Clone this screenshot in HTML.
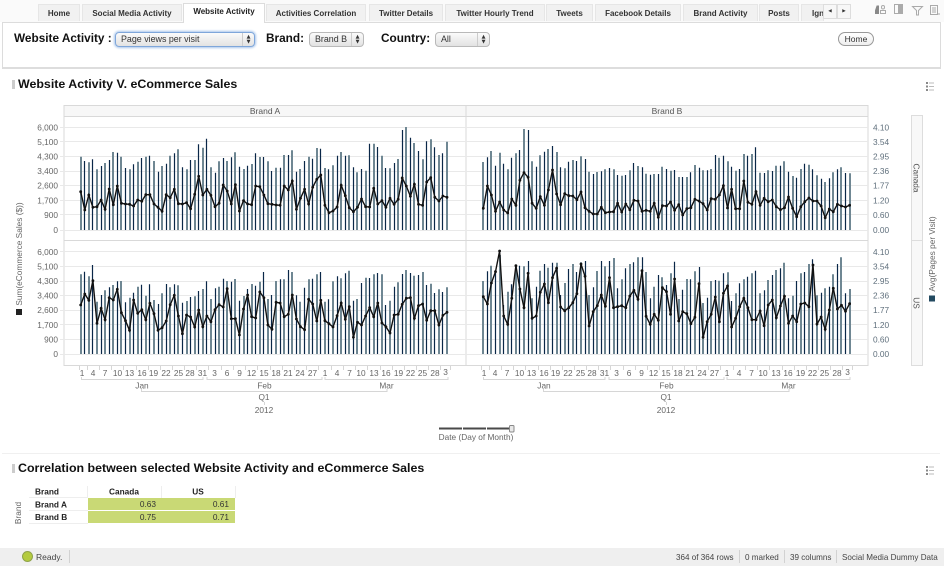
<!DOCTYPE html>
<html>
<head>
<meta charset="utf-8">
<style>
html,body{margin:0;padding:0;background:#fff}
#p{position:relative;width:944px;height:566px;overflow:hidden;background:#fff;font-family:"Liberation Sans",sans-serif;color:#222;filter:blur(0.3px)}
#p div{position:absolute;white-space:nowrap;box-sizing:border-box}
.tab{top:4px;height:17px;background:#f1f1f1;border:1px solid #e6e6e6;border-bottom:none;font:bold 8px/17px "Liberation Sans",sans-serif;text-align:center;color:#333}
.lab{font:bold 11.8px/16px "Liberation Sans",sans-serif;color:#111;top:30px}
.sel{height:15px;border:1px solid #b9b9b9;border-radius:4px;background:linear-gradient(#fbfbfb,#e2e2e2);font:8.9px/13px "Liberation Sans",sans-serif;color:#333;padding-left:5px}
.arr{right:0;top:0;width:12px;height:13px;border-left:1px solid #ccc;font:5px/5px "DejaVu Sans",sans-serif;text-align:center;padding-top:2px}
.ttl{font:bold 12.4px/16px "Liberation Sans",sans-serif;color:#111;left:18px}
.st{top:552px;font:8.1px/11px "Liberation Sans",sans-serif;color:#444}
.sp{top:550px;width:1px;height:13px;background:#d2d2d2}
svg{position:absolute;left:0;top:0}
svg text{font-family:"Liberation Sans",sans-serif}
</style>
</head>
<body>
<div id="p">
<div style="left:0;top:0;width:944px;height:22px;background:#fafafa"></div>
<div class="tab" style="left:38px;width:42px">Home</div>
<div class="tab" style="left:82px;width:100px">Social Media Activity</div>
<div class="tab" style="left:266px;width:100px">Activities Correlation</div>
<div class="tab" style="left:369px;width:74px">Twitter Details</div>
<div class="tab" style="left:445px;width:100px">Twitter Hourly Trend</div>
<div class="tab" style="left:546px;width:47px">Tweets</div>
<div class="tab" style="left:595px;width:86px">Facebook Details</div>
<div class="tab" style="left:683px;width:75px">Brand Activity</div>
<div class="tab" style="left:759px;width:40px">Posts</div>
<div class="tab" style="left:801px;width:23px;text-align:left;padding-left:10px;overflow:hidden">Ignite</div>
<div style="left:823px;top:4px;width:14px;height:15px;background:#f7f7f7;border:1px solid #ddd;font:4.5px/13px 'DejaVu Sans',sans-serif;text-align:center;color:#333">◀</div>
<div style="left:837px;top:4px;width:14px;height:15px;background:#f7f7f7;border:1px solid #ddd;font:4.5px/13px 'DejaVu Sans',sans-serif;text-align:center;color:#333">▶</div>
<div style="left:2px;top:22px;width:939px;height:47px;border:1px solid #dcdcdc;border-bottom:2px solid #ddd;background:#fff"></div>
<div class="tab" style="left:183px;top:3px;width:82px;height:20px;background:#fff;color:#222;border-color:#dcdcdc;line-height:16px;z-index:2">Website Activity</div>
<div class="lab" style="left:14px">Website Activity :</div>
<div class="sel" style="left:115px;top:32px;width:140px;border-color:#7ea6da;box-shadow:0 0 2px 1px #a9c6ec">Page views per visit<div class="arr">▲<br>▼</div></div>
<div class="lab" style="left:266px">Brand:</div>
<div class="sel" style="left:309px;top:32px;width:55px">Brand B<div class="arr">▲<br>▼</div></div>
<div class="lab" style="left:381px">Country:</div>
<div class="sel" style="left:435px;top:32px;width:55px;padding-left:5px">All<div class="arr">▲<br>▼</div></div>
<div style="left:838px;top:32px;width:36px;height:14px;border:1px solid #999;border-radius:7px;background:linear-gradient(#fff,#eee);font:8.5px/12px 'Liberation Sans',sans-serif;text-align:center;color:#333">Home</div>
<div style="left:12px;top:80px;width:3px;height:9px;background:#ccc"></div>
<div class="ttl" style="top:76px">Website Activity V. eCommerce Sales</div>
<div style="left:12px;top:464px;width:3px;height:9px;background:#ccc"></div>
<div class="ttl" style="top:460px">Correlation between selected Website Activity and eCommerce Sales</div>
<div style="left:2px;top:453px;width:938px;height:1px;background:#f0f0f0"></div>

<svg width="944" height="566" viewBox="0 0 944 566">
<!-- toolbar icons -->
<g fill="none" stroke="#aaa" stroke-width="1">
<rect x="881.5" y="5.5" width="3" height="3.500" rx="1.500"/><path d="M880.500 13.500V10.500H885.500V13.500Z"/>
<path d="M875.500 13.500V10.500L877 6H878.500V13.500Z" fill="#888" stroke="#888"/>
<rect x="894.5" y="4.5" width="8" height="9"/><rect x="898" y="5" width="4" height="8" fill="#aaa" stroke="none"/>
<path d="M912.5 6.5H922.5L918.5 10.5V15L916.5 15V10.5Z"/>
<path d="M930.5 14.5V5.5H937.5V14.5Z M932 8H936M932 10H936M932 12H936M937 14H940"/>
</g>
<g fill="#888"><rect x="926" y="82" width="2" height="2"/><rect x="926" y="85.500" width="2" height="2"/><rect x="926" y="89" width="2" height="2"/>
<rect x="926" y="466" width="2" height="2"/><rect x="926" y="469.500" width="2" height="2"/><rect x="926" y="473" width="2" height="2"/></g>
<path d="M929 83H934M929 86.500H934M929 90H934M929 467H934M929 470.500H934M929 474H934" stroke="#bbb" stroke-width="1"/>

<!-- chart frame -->
<rect x="64" y="106" width="804" height="10" fill="#f7f7f7"/>
<path d="M64 105.500H868M64 116.500H868M64 240.500H868M64 365.500H868M64 105V366M466 105V366M868 105V366" stroke="#d9d9d9" stroke-width="1" fill="none"/>
<text x="265" y="114" font-size="8.500" text-anchor="middle" fill="#555">Brand A</text>
<text x="667" y="114" font-size="8.500" text-anchor="middle" fill="#555">Brand B</text>
<path id="grid" d="M60 127.500H868M60 141.500H868M60 156.500H868M60 171.500H868M60 185.500H868M60 200.500H868M60 214.500H868M60 230.500H868M60 251.500H868M60 266.500H868M60 281.500H868M60 295.500H868M60 310.500H868M60 324.500H868M60 339.500H868M60 354.500H868" stroke="#e9e9e9" stroke-width="1"/>
<g id="marks"></g>

<!-- left axis -->
<g font-size="8.300" text-anchor="end" fill="#666">
<text x="58" y="130.500">6,000</text><text x="58" y="145">5,100</text><text x="58" y="159.500">4,300</text><text x="58" y="174">3,400</text><text x="58" y="188.500">2,600</text><text x="58" y="203.500">1,700</text><text x="58" y="218">900</text><text x="58" y="233">0</text>
<text x="58" y="255">6,000</text><text x="58" y="269.500">5,100</text><text x="58" y="284">4,300</text><text x="58" y="298.500">3,400</text><text x="58" y="313">2,600</text><text x="58" y="328">1,700</text><text x="58" y="342.500">900</text><text x="58" y="357">0</text>
</g>
<!-- right axis -->
<g font-size="8.300" fill="#5f6f7c">
<text x="873" y="130.500">4.10</text><text x="873" y="145">3.54</text><text x="873" y="159.500">2.95</text><text x="873" y="174">2.36</text><text x="873" y="188.500">1.77</text><text x="873" y="203.500">1.20</text><text x="873" y="218">0.60</text><text x="873" y="233">0.00</text>
<text x="873" y="255">4.10</text><text x="873" y="269.500">3.54</text><text x="873" y="284">2.95</text><text x="873" y="298.500">2.36</text><text x="873" y="313">1.77</text><text x="873" y="328">1.20</text><text x="873" y="342.500">0.60</text><text x="873" y="357">0.00</text>
</g>
<text transform="translate(22,254) rotate(-90)" font-size="8.300" text-anchor="middle" fill="#666">Sum(eCommerce Sales ($))</text>
<rect x="16" y="309" width="6" height="6" fill="#222"/>
<text transform="translate(935,254) rotate(-90)" font-size="8.300" text-anchor="middle" fill="#666">Avg(Pages per Visit)</text>
<rect x="929" y="295.500" width="6" height="6" fill="#234a60"/>
<!-- row headers -->
<rect x="911.500" y="115.500" width="11" height="250" fill="#f8f8f8" stroke="#ddd"/>
<path d="M911 240.500H923" stroke="#ddd"/>
<text transform="translate(913.500,178) rotate(90)" font-size="8.300" text-anchor="middle" fill="#555">Canada</text>
<text transform="translate(913.500,303) rotate(90)" font-size="8.300" text-anchor="middle" fill="#555">US</text>

<!-- x axis A -->
<g font-size="8.300" text-anchor="middle" fill="#666">
<text x="82" y="376">1</text><text x="93" y="376">4</text><text x="105" y="376">7</text><text x="117.500" y="376">10</text><text x="129.500" y="376">13</text><text x="142" y="376">16</text><text x="153.500" y="376">19</text><text x="166" y="376">22</text><text x="178.500" y="376">25</text><text x="190" y="376">28</text><text x="202.500" y="376">31</text><text x="214.500" y="376">3</text><text x="227" y="376">6</text><text x="239.500" y="376">9</text><text x="251.500" y="376">12</text><text x="264" y="376">15</text><text x="276" y="376">18</text><text x="288" y="376">21</text><text x="300" y="376">24</text><text x="312.500" y="376">27</text><text x="325" y="376">1</text><text x="337" y="376">4</text><text x="349.500" y="376">7</text><text x="361" y="376">10</text><text x="374" y="376">13</text><text x="386" y="376">16</text><text x="398.500" y="376">19</text><text x="410.500" y="376">22</text><text x="422.500" y="376">25</text><text x="435" y="376">28</text><text x="445.500" y="375">3</text>
<text x="142" y="388.500">Jan</text><text x="264.500" y="388.500">Feb</text><text x="386.500" y="388.500">Mar</text><text x="264" y="400">Q1</text><text x="264" y="413">2012</text>
</g>
<!-- x axis B -->
<g font-size="8.300" text-anchor="middle" fill="#666">
<text x="484" y="376">1</text><text x="495" y="376">4</text><text x="507" y="376">7</text><text x="519.500" y="376">10</text><text x="531.500" y="376">13</text><text x="544" y="376">16</text><text x="555.500" y="376">19</text><text x="568" y="376">22</text><text x="580.500" y="376">25</text><text x="592" y="376">28</text><text x="604.500" y="376">31</text><text x="616.500" y="376">3</text><text x="629" y="376">6</text><text x="641.500" y="376">9</text><text x="653.500" y="376">12</text><text x="666" y="376">15</text><text x="678" y="376">18</text><text x="690" y="376">21</text><text x="702" y="376">24</text><text x="714.500" y="376">27</text><text x="727" y="376">1</text><text x="739" y="376">4</text><text x="751.500" y="376">7</text><text x="763" y="376">10</text><text x="776" y="376">13</text><text x="788" y="376">16</text><text x="800.500" y="376">19</text><text x="812.500" y="376">22</text><text x="824.500" y="376">25</text><text x="837" y="376">28</text><text x="847.500" y="375">3</text>
<text x="544" y="388.500">Jan</text><text x="666.500" y="388.500">Feb</text><text x="788.500" y="388.500">Mar</text><text x="666" y="400">Q1</text><text x="666" y="413">2012</text>
</g>
<g fill="none" stroke="#d6d6d6" stroke-width="1">
<path d="M81.500 377V379.500H203V377M207 377V379.500H322V377M325 377V379.500H448V377M141.500 389V391.500H387V389M264.500 402V405"/>
<path d="M483.500 377V379.500H605V377M609 377V379.500H724V377M727 377V379.500H850V377M543.500 389V391.500H789V389M666.500 402V405"/>
<path id="tk" d="M79.500 366V370M87.500 366V370M99.500 366V370M111.500 366V370M123.500 366V370M136.500 366V370M148.500 366V370M160.500 366V370M172.500 366V370M184.500 366V370M196.500 366V370M208.500 366V370M221.500 366V370M233.500 366V370M245.500 366V370M257.500 366V370M270.500 366V370M282.500 366V370M294.500 366V370M306.500 366V370M318.500 366V370M331.500 366V370M343.500 366V370M355.500 366V370M367.500 366V370M380.500 366V370M392.500 366V370M404.500 366V370M416.500 366V370M428.500 366V370M440.500 366V370M450.500 366V370"/>
<path d="M481.500 366V370M489.500 366V370M501.500 366V370M513.500 366V370M525.500 366V370M538.500 366V370M550.500 366V370M562.500 366V370M574.500 366V370M586.500 366V370M598.500 366V370M610.500 366V370M623.500 366V370M635.500 366V370M647.500 366V370M659.500 366V370M672.500 366V370M684.500 366V370M696.500 366V370M708.500 366V370M720.500 366V370M733.500 366V370M745.500 366V370M757.500 366V370M769.500 366V370M782.500 366V370M794.500 366V370M806.500 366V370M818.500 366V370M830.500 366V370M842.500 366V370M852.500 366V370"/>
</g>
<!-- slider -->
<path d="M439 428.500H462M463 428.500H486M487 428.500H509" stroke="#4a4a4a" stroke-width="2"/>
<rect x="509.500" y="425.500" width="4.500" height="6.500" rx="1" fill="#e8e8e8" stroke="#888"/>
<text x="476" y="440" font-size="8.300" text-anchor="middle" fill="#666">Date (Day of Month)</text>

<!-- table -->
<path d="M87.500 486V498M161.500 486V498M235.500 486V498" stroke="#eee"/>
<path d="M29 497.500H88M29 510.500H88M29 523.500H88" stroke="#eee"/>
<rect x="88" y="498" width="147" height="12" fill="#c9d975"/>
<rect x="88" y="511" width="147" height="12" fill="#c9d975"/>
<g font-size="8.300" font-weight="bold" fill="#222">
<text x="35" y="494.500">Brand</text><text x="35" y="507.500">Brand A</text><text x="35" y="520">Brand B</text>
<text x="124" y="494.500" text-anchor="middle">Canada</text><text x="198" y="494.500" text-anchor="middle">US</text>
</g>
<g font-size="8.300" text-anchor="end" fill="#333">
<text x="156" y="507">0.63</text><text x="229" y="507">0.61</text><text x="156" y="520">0.75</text><text x="229" y="520">0.71</text>
</g>
<text transform="translate(21,513) rotate(-90)" font-size="8.300" text-anchor="middle" fill="#666">Brand</text>
</svg>

<div style="left:0;top:548px;width:944px;height:18px;background:#efefef"></div>
<div style="left:22px;top:551px;width:11px;height:11px;border-radius:50%;background:#b4cb3f;border:1px solid #8fa34a"></div>
<div class="st" style="left:36px;font-size:8.5px">Ready.</div>
<div class="sp" style="left:69px"></div>
<div class="st" style="left:676px">364 of 364 rows</div>
<div class="sp" style="left:739px"></div>
<div class="st" style="left:745px">0 marked</div>
<div class="sp" style="left:784px"></div>
<div class="st" style="left:790px">39 columns</div>
<div class="sp" style="left:836px"></div>
<div class="st" style="left:842px">Social Media Dummy Data</div>
</div>
<script>
var P=[
{x0:80.7,oy:100,base:230,
b:[170,183,187,178,208,198,189,180,156,158,170,204,208,193,185,174,170,167,183,215,198,191,167,160,148,202,208,180,180,133,143,116,202,218,184,174,183,172,157,200,207,197,192,160,171,171,184,213,203,203,165,165,151,215,207,183,170,176,144,146,204,208,196,167,156,167,166,202,217,207,212,131,131,141,167,204,205,189,177,90,81,113,129,153,178,124,118,142,165,160,125],
l:[275,330,285,322,320,300,328,267,314,258,310,312,313,318,300,304,284,284,312,322,334,284,293,268,311,312,308,326,283,229,285,268,286,320,310,255,273,312,254,333,302,312,314,258,260,285,311,313,315,316,258,270,243,328,295,268,312,262,238,225,316,338,333,321,256,287,323,335,322,297,320,321,265,312,302,322,295,313,298,234,258,289,253,313,316,246,233,292,303,288,292]},
{x0:483.3,oy:100,base:230,
b:[186,172,153,197,158,191,208,173,160,150,87,90,184,200,166,155,147,138,156,202,205,185,180,183,169,177,215,222,216,214,208,204,208,225,227,225,211,189,198,202,221,224,222,222,200,207,212,210,231,231,231,217,195,203,211,211,207,165,173,167,184,200,212,207,162,167,162,142,218,219,211,213,197,197,184,215,228,233,207,191,194,208,226,236,246,235,217,208,202,219,220],
l:[325,258,285,334,306,330,339,297,316,241,218,232,310,325,290,316,270,210,282,314,281,287,288,299,276,323,334,342,342,322,338,336,335,310,336,312,329,301,303,334,331,334,310,352,317,318,306,331,314,345,326,323,298,303,311,330,296,298,285,257,324,268,326,326,243,307,313,275,316,295,305,300,320,329,323,291,325,350,320,305,294,303,303,318,353,327,335,313,318,321,316]},
{x0:80.7,oy:235,base:354,
b:[118,110,124,90,200,180,166,157,150,139,138,202,188,173,155,149,182,148,195,207,175,147,157,148,151,203,198,186,184,168,162,139,192,160,155,131,138,140,132,197,183,162,147,152,140,111,192,180,138,133,133,105,111,181,200,158,133,131,118,111,200,193,139,124,130,115,107,197,192,144,128,129,118,114,118,210,197,155,142,117,105,114,122,120,111,150,146,174,163,171,157],
l:[210,177,196,137,265,220,254,188,195,163,233,257,286,195,235,224,254,205,236,286,278,258,209,181,243,296,240,246,276,225,275,243,260,224,209,216,161,251,251,300,222,180,245,249,171,188,270,283,202,204,245,238,180,252,275,284,193,207,258,196,257,266,276,242,204,253,215,307,262,270,243,218,245,204,264,275,294,240,238,208,190,188,250,212,207,256,227,227,270,241,232]},
{x0:483.3,oy:235,base:354,
b:[138,109,92,105,60,210,170,148,92,92,94,78,190,155,107,87,98,83,83,180,144,102,87,111,82,78,180,157,108,78,94,78,69,160,133,100,87,82,67,67,111,190,155,120,127,150,115,80,192,164,132,133,109,96,204,188,138,135,137,115,112,198,175,145,133,125,115,107,175,166,135,120,105,100,83,190,182,138,115,111,87,73,181,173,160,155,118,87,67,175,162],
l:[185,207,144,110,48,243,268,190,92,162,218,115,250,243,172,147,203,128,100,216,227,218,203,176,87,124,273,230,212,180,214,128,218,215,212,218,183,166,193,107,244,268,238,256,158,170,238,132,258,230,236,266,247,146,307,260,238,186,260,175,153,276,250,215,190,218,254,254,228,272,210,195,248,213,184,265,243,260,207,204,215,90,267,246,283,225,160,222,211,229,206]}
];
var s='';
P.forEach(function(p){
  var nv='',gr='',ln='',pts='';
  p.b.forEach(function(z,i){
    var x=p.x0+4.07*i,y=(p.oy+z/3).toFixed(1);
    if(i%2){nv+='M'+(Math.floor(x)+.5)+' '+p.base+'V'+y;}
    else{gr+='M'+Math.round(x)+' '+p.base+'V'+y;}
  });
  p.l.forEach(function(z,i){
    var x=(p.x0+4.07*i).toFixed(1),y=(p.oy+z/3).toFixed(1);
    ln+=(i?'L':'M')+x+' '+y;
    pts+='<circle cx="'+x+'" cy="'+y+'" r="1.4"/>';
  });
  s+='<path d="'+gr+'" stroke="#6f8793" stroke-width="2" fill="none"/>';
  s+='<path d="'+nv+'" stroke="#0a2748" stroke-width="1.200" fill="none"/>';
  s+='<path d="'+ln+'" stroke="#111" stroke-width="1.400" fill="none"/>';
  s+='<g fill="#111">'+pts+'</g>';
});
document.getElementById('marks').innerHTML=s;
</script>
</body>
</html>
